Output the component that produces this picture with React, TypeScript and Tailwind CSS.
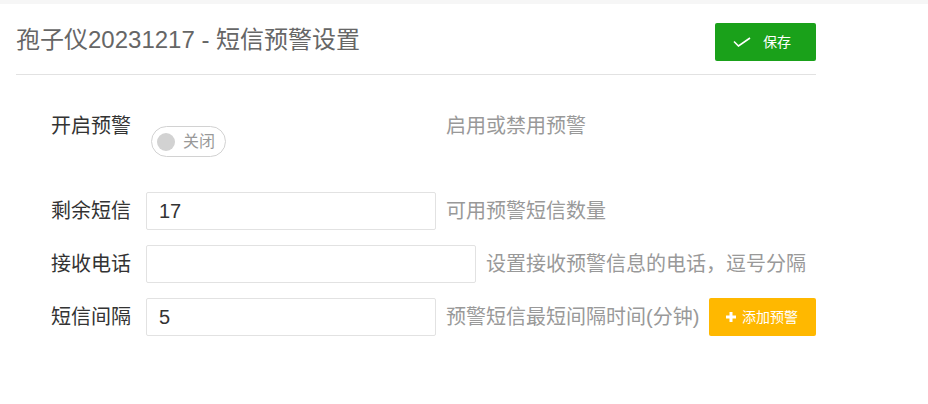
import { useState } from "react";

const font = { fontFamily: '"Liberation Sans", "Noto Sans CJK SC", sans-serif' };

function CheckIcon() {
  return (
    <svg width="18" height="10" viewBox="0 0 18 10" fill="none">
      <path d="M1 4.5 5.5 9 17 1" stroke="white" strokeWidth="1.6" />
    </svg>
  );
}

export default function App() {
  const [enabled, setEnabled] = useState(false);

  return (
    <div className="min-h-screen bg-white" style={font}>
      <div className="h-[4px] bg-[#f6f6f6]" />
      <div className="ml-4 w-[800px]">
        {/* header */}
        <div className="flex items-center justify-between border-b border-[#e2e2e2] pt-[19px] pb-[13px]">
          <h1 className="text-[24px] leading-[32px] text-[#666] -mt-[4px]">
            孢子仪20231217 - 短信预警设置
          </h1>
          <button className="flex h-[38px] w-[101px] items-center gap-[12px] rounded-[2px] bg-[#1aa11a] pl-[18px] text-[14px] text-white">
            <CheckIcon />
            保存
          </button>
        </div>

        {/* form */}
        <div className="mt-[32px] flex flex-col">
          <div className="flex items-start">
            <label className="w-[130px] shrink-0 pl-[35px] pt-[9px] text-[20px] leading-[20px] text-[#333]">
              开启预警
            </label>
            <div className="w-[300px] shrink-0 pl-[5px] pt-[19px]">
              <button
                onClick={() => setEnabled(!enabled)}
                className="flex h-[31px] w-[75px] items-center gap-[8px] rounded-full border border-[#d2d2d2] pl-[5px] text-[16px] text-[#999]"
              >
                <span className="h-[18px] w-[18px] rounded-full bg-[#d2d2d2]" />
                {enabled ? "开启" : "关闭"}
              </button>
            </div>
            <div className="pt-[9px] text-[20px] leading-[20px] text-[#999]">启用或禁用预警</div>
          </div>

          <div className="mt-[35px] flex items-center">
            <label className="w-[130px] shrink-0 pl-[35px] text-[20px] leading-[38px] text-[#333]">
              剩余短信
            </label>
            <input
              defaultValue="17"
              className="h-[38px] w-[290px] rounded-[2px] border border-[#e2e2e2] px-[12px] text-[20px] text-[#333] outline-none"
            />
            <div className="ml-[10px] text-[20px] text-[#999]">可用预警短信数量</div>
          </div>

          <div className="mt-[15px] flex items-center">
            <label className="w-[130px] shrink-0 pl-[35px] text-[20px] leading-[38px] text-[#333]">
              接收电话
            </label>
            <input className="h-[38px] w-[330px] rounded-[2px] border border-[#e2e2e2] px-[12px] text-[20px] text-[#333] outline-none" />
            <div className="ml-[10px] text-[20px] text-[#999]">设置接收预警信息的电话，逗号分隔</div>
          </div>

          <div className="mt-[15px] flex items-center">
            <label className="w-[130px] shrink-0 pl-[35px] text-[20px] leading-[38px] text-[#333]">
              短信间隔
            </label>
            <input
              defaultValue="5"
              className="h-[38px] w-[290px] rounded-[2px] border border-[#e2e2e2] px-[12px] text-[20px] text-[#333] outline-none"
            />
            <div className="ml-[10px] text-[20px] text-[#999]">预警短信最短间隔时间(分钟)</div>
            <button className="ml-auto flex h-[38px] w-[107px] items-center gap-[6px] rounded-[2px] bg-[#ffb800] pl-[17px] text-[14px] text-white">
              <svg width="10" height="10" viewBox="0 0 10 10">
                <path d="M5 0v10M0 5h10" stroke="white" strokeWidth="3" />
              </svg>
              添加预警
            </button>
          </div>
        </div>
      </div>
    </div>
  );
}
